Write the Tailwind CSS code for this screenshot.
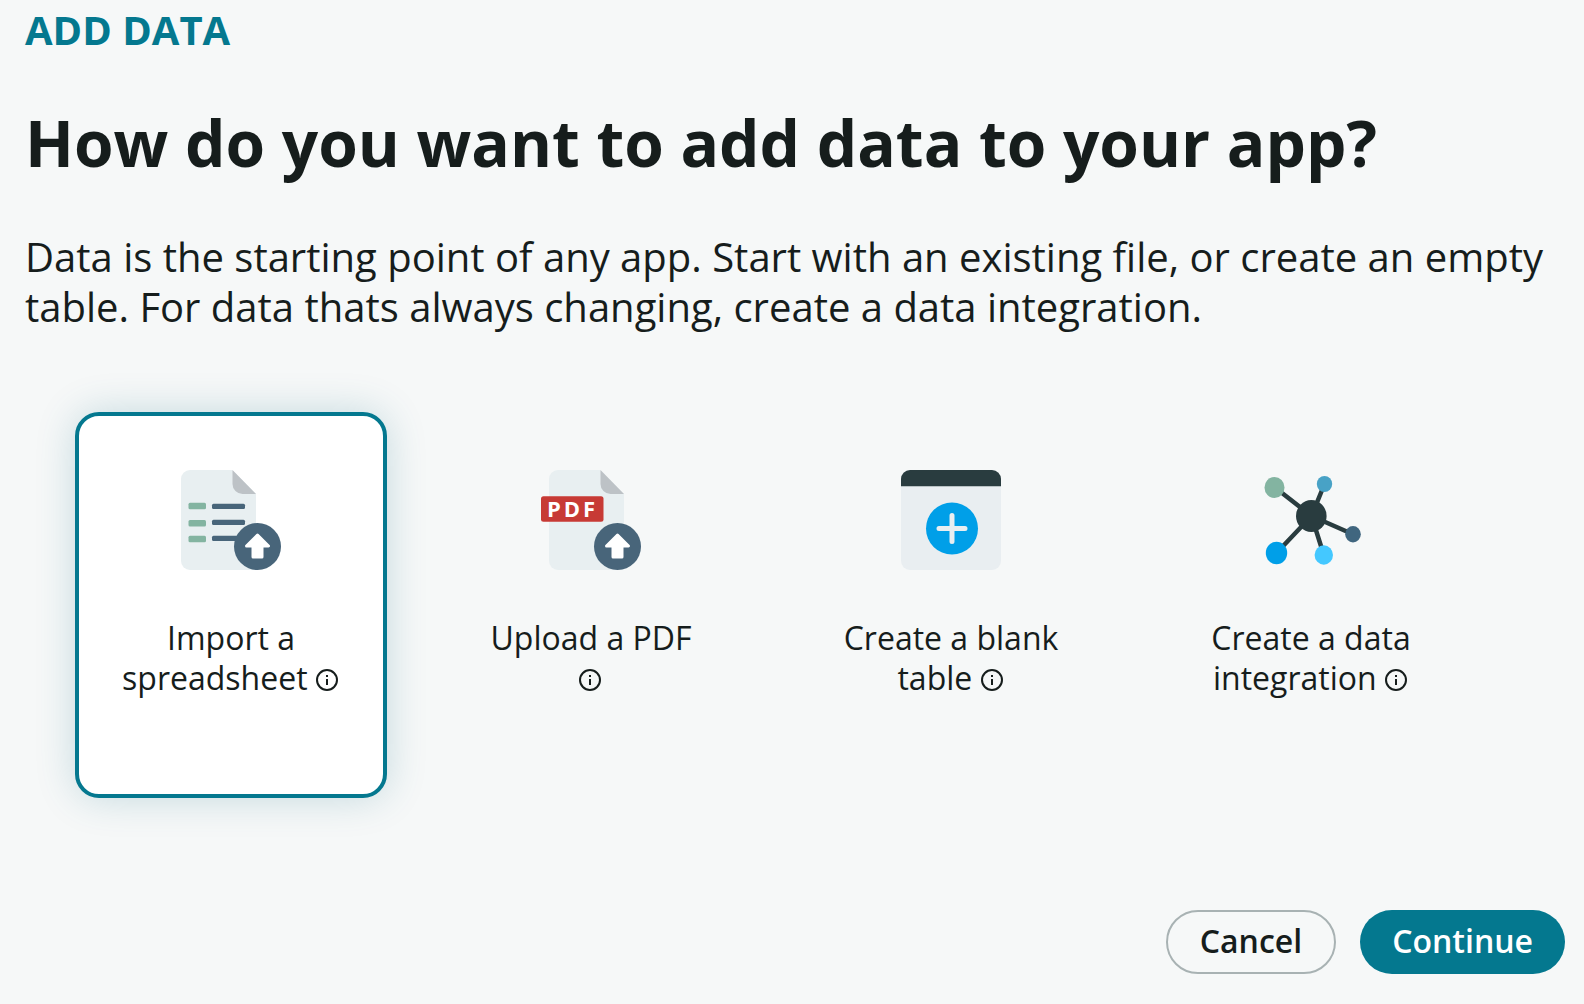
<!DOCTYPE html>
<html lang="en">
<head>
<meta charset="utf-8">
<meta name="viewport" content="width=device-width, initial-scale=1">
<title>Add data</title>
<script src="https://cdn.jsdelivr.net/npm/@tailwindcss/browser@4"></script>
</head>
<body class="min-h-screen bg-[#f6f8f8] font-['Open_Sans',sans-serif] text-[#161d1c]">
<svg class="hidden" aria-hidden="true">
  <symbol id="info" viewBox="1 0 24 24">
    <circle cx="12" cy="12" r="10" fill="none" stroke="currentColor" stroke-width="2"/>
    <path d="M11 7h2v2h-2zM11 11h2v6h-2z" fill="currentColor"/>
  </symbol>
  <symbol id="upload" viewBox="0 0 48 48">
    <circle cx="24" cy="24" r="23.5" fill="#48657a"/>
    <path d="M24 12.5L35 23.500H28.500V34.500H19.500V23.500H13z" fill="#fff" stroke="#fff" stroke-width="3" stroke-linejoin="round"/>
  </symbol>
</svg>
<form class="flex min-h-screen flex-col px-[25px] pt-[5px] pb-[30px]">
  <p class="text-[40px] leading-[50px] font-bold text-[#04788f]">ADD DATA</p>
  <h1 class="mt-12 text-[64px] leading-[80px] font-bold">How do you want to add data to your app?</h1>
  <p class="mt-[49px] text-[40px] leading-[50px]">Data is the starting point of any app. Start with an existing file, or create an empty table. For data thats always changing, create a data integration.</p>

  <fieldset class="mt-20 flex flex-wrap gap-12 px-[50px]" aria-label="Data source">
    <label class="relative flex h-[386px] w-[312px] flex-col items-center gap-12 rounded-3xl border-4 border-transparent px-10 pt-[54px] text-center text-[32px] leading-10 has-checked:border-[#04788f] has-checked:bg-white has-checked:shadow-[0_0_40px_rgba(4,100,125,0.2)]">
      <input class="sr-only" type="radio" name="source" value="spreadsheet" checked>
      <svg class="size-[100px] shrink-0" viewBox="0 0 100 100" aria-hidden="true">
        <path d="M9 0H51L75 24V100H9a9 9 0 0 1-9-9V9a9 9 0 0 1 9-9z" fill="#e8eff1"/>
        <path d="M51.500 0L75 24H61.500a10 10 0 0 1-10-10z" fill="#bdc2c6"/>
        <g fill="#83b4a1">
          <rect x="7.500" y="32.700" width="17.500" height="6.500" rx="1.500"/>
          <rect x="7.500" y="49.900" width="17.500" height="6.500" rx="1.500"/>
          <rect x="7.500" y="65.700" width="17.500" height="6.500" rx="1.500"/>
        </g>
        <g fill="#48657a">
          <rect x="31" y="33.700" width="33" height="5.200" rx="1.500"/>
          <rect x="31" y="49.800" width="33" height="5.200" rx="1.500"/>
          <rect x="31" y="65.700" width="33" height="5.200" rx="1.500"/>
        </g>
        <use href="#upload" x="52.500" y="52.500" width="48" height="48"/>
      </svg>
      <span>Import a spreadsheet <svg class="inline size-6 align-[-2px]" aria-hidden="true"><use href="#info"/></svg></span>
    </label>

    <label class="relative flex h-[386px] w-[312px] flex-col items-center gap-12 rounded-3xl border-4 border-transparent px-10 pt-[54px] text-center text-[32px] leading-10 has-checked:border-[#04788f] has-checked:bg-white has-checked:shadow-[0_0_40px_rgba(4,100,125,0.2)]">
      <input class="sr-only" type="radio" name="source" value="pdf">
      <svg class="size-[100px] shrink-0" viewBox="0 0 100 100" aria-hidden="true">
        <path d="M17 0H59L83 24V100H17a9 9 0 0 1-9-9V9a9 9 0 0 1 9-9z" fill="#e8eff1"/>
        <path d="M59.500 0L83 24H69.500a10 10 0 0 1-10-10z" fill="#bdc2c6"/>
        <rect x="0" y="26.300" width="62.500" height="25.400" rx="2.500" fill="#c73a35"/>
        <text x="6" y="47" font-size="22" font-weight="700" letter-spacing="3" fill="#fff">PDF</text>
        <use href="#upload" x="52.500" y="52.500" width="48" height="48"/>
      </svg>
      <span>Upload a PDF <svg class="inline size-6 align-[-2px]" aria-hidden="true"><use href="#info"/></svg></span>
    </label>

    <label class="relative flex h-[386px] w-[312px] flex-col items-center gap-12 rounded-3xl border-4 border-transparent px-10 pt-[54px] text-center text-[32px] leading-10 has-checked:border-[#04788f] has-checked:bg-white has-checked:shadow-[0_0_40px_rgba(4,100,125,0.2)]">
      <input class="sr-only" type="radio" name="source" value="blank">
      <svg class="size-[100px] shrink-0" viewBox="0 0 100 100" aria-hidden="true">
        <rect width="100" height="100" rx="9" fill="#e9eef1"/>
        <path d="M0 16.300V9a9 9 0 0 1 9-9h82a9 9 0 0 1 9 9v7.300z" fill="#293c3f"/>
        <circle cx="51" cy="58.500" r="26" fill="#009fe8"/>
        <path d="M51 45.500v26M38 58.500h26" stroke="#e9eef1" stroke-width="5" stroke-linecap="round"/>
        <path d="M47 58.500l4-4 4 4-4 4z" fill="#e9eef1"/>
      </svg>
      <span>Create a blank table <svg class="inline size-6 align-[-2px]" aria-hidden="true"><use href="#info"/></svg></span>
    </label>

    <label class="relative flex h-[386px] w-[312px] flex-col items-center gap-12 rounded-3xl border-4 border-transparent px-10 pt-[54px] text-center text-[32px] leading-10 has-checked:border-[#04788f] has-checked:bg-white has-checked:shadow-[0_0_40px_rgba(4,100,125,0.2)]">
      <input class="sr-only" type="radio" name="source" value="integration">
      <svg class="size-[100px] shrink-0" viewBox="0 0 100 100" aria-hidden="true">
        <path d="M14 17.500L50.500 46L63.500 14M50.500 46L92 64.300M50.500 46L62.800 85M50.500 46L15.500 83" fill="none" stroke="#293c3f" stroke-width="4.500"/>
        <ellipse cx="50.300" cy="46" rx="15.300" ry="16" fill="#293c3f"/>
        <ellipse cx="13.500" cy="17.500" rx="10" ry="10.500" fill="#83b4a1"/>
        <ellipse cx="63.500" cy="14" rx="7.700" ry="8" fill="#48a2c6"/>
        <ellipse cx="92" cy="64.300" rx="7.800" ry="8.200" fill="#40667f"/>
        <ellipse cx="62.800" cy="85" rx="9.200" ry="9.700" fill="#44c8ff"/>
        <ellipse cx="15.500" cy="83" rx="10.700" ry="11.200" fill="#009fe8"/>
      </svg>
      <span>Create a data integration <svg class="inline size-6 align-[-2px]" aria-hidden="true"><use href="#info"/></svg></span>
    </label>
  </fieldset>

  <div class="-mr-1.5 mt-auto flex justify-end gap-6">
    <button type="button" class="h-16 rounded-full border-2 border-[#a8b2b3] px-8 pb-0.5 text-[32px] leading-10 font-semibold">Cancel</button>
    <button type="submit" class="h-16 rounded-full bg-[#04788f] px-8 pb-0.5 text-[32px] leading-10 font-semibold text-white">Continue</button>
  </div>
</form>
</body>
</html>
